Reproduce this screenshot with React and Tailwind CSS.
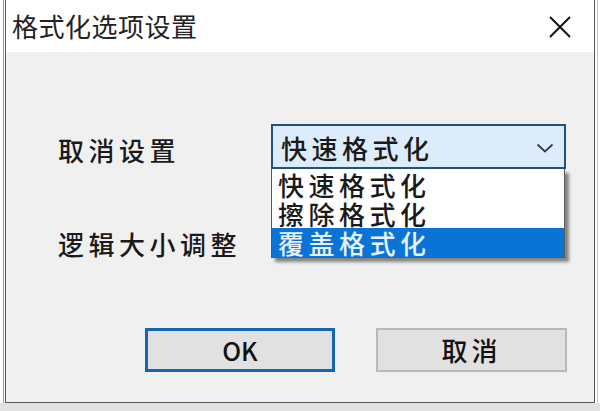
export default function App() {
  return (
    <div className="w-[600px] h-[411px] bg-white flex flex-col overflow-hidden font-['Noto_Sans_CJK_SC','Noto_Sans',sans-serif] font-medium text-[#1a1a1a]">
      <div className="flex h-[403px]">
        <div className="w-[3px] h-full bg-white" />
        <div className="w-[1px] h-full bg-[#9a9a9a]" />
        <div className="w-[1px] h-full bg-white" />
        {/* Dialog */}
        <div className="w-[590px] h-full flex flex-col border-l border-r border-b border-[#555]">
          {/* Title bar */}
          <div className="h-[52px] bg-white flex items-center justify-between pl-[6px] pr-[22px] shrink-0">
            <span className="text-[26px] leading-none tracking-[0.5px] text-[#222] font-normal">格式化选项设置</span>
            <svg width="24" height="24" viewBox="0 0 24 24" className="mt-[1px]">
              <path d="M2 2 L22 22 M22 2 L2 22" stroke="#111" strokeWidth="2" fill="none" />
            </svg>
          </div>
          {/* Body */}
          <div className="flex-1 bg-[#f0f0f0] flex flex-col pt-[72px]">
            <div className="flex items-center h-[45px] pl-[52px]">
              <span className="w-[213px] text-[26px] leading-none tracking-[4.5px] pt-[6px]">取消设置</span>
              <div className="relative w-[295px] h-[45px]">
                <div className="w-full h-full border-2 border-[#24507c] bg-[#dcecfb] flex items-center justify-between pl-[8px] pr-[10px]">
                  <span className="text-[26px] leading-none tracking-[4.5px] pt-[3px]">快速格式化</span>
                  <svg width="18" height="10" viewBox="0 0 18 10" className="mt-[2px]">
                    <path d="M1.5 1.5 L9 8.5 L16.5 1.5" stroke="#3a3a3a" strokeWidth="1.8" fill="none" />
                  </svg>
                </div>
                {/* Drop-down list */}
                <div className="absolute left-0 top-full w-[294px] bg-white border-l border-b border-r border-[#5a5a5a] shadow-[4px_4px_3px_rgba(0,0,0,0.45)] flex flex-col pt-[1px]">
                  <div className="h-[29px] flex items-center pl-[6px] text-[26px] leading-[26px] tracking-[4.5px]">快速格式化</div>
                  <div className="h-[29px] flex items-center pl-[6px] text-[26px] leading-[26px] tracking-[4.5px]">擦除格式化</div>
                  <div className="h-[29px] flex items-center pl-[6px] text-[26px] leading-[26px] tracking-[4.5px] bg-[#0a74d6] text-[#e6f2ff]">覆盖格式化</div>
                </div>
              </div>
            </div>
            <div className="flex items-center h-[45px] pl-[52px] mt-[52px]">
              <span className="w-[213px] text-[26px] leading-none tracking-[4.5px]">逻辑大小调整</span>
            </div>
            <div className="flex justify-end gap-[41px] pr-[27px] mt-[62px]">
              <button className="w-[190px] h-[44px] border-[3px] border-[#1864b4] bg-[#e1e1e1] flex items-center justify-center text-[25px] leading-none text-[#111]">
                OK
              </button>
              <button className="w-[191px] h-[44px] border-2 border-[#b9b9b9] bg-[#e1e1e1] flex items-center justify-center text-[26px] leading-none tracking-[4px] text-[#111]">
                取消
              </button>
            </div>
          </div>
        </div>
        <div className="flex-1 h-full bg-white flex">
          <div className="w-[2px]" />
          <div className="w-[1px] h-full bg-[#c8c8c8]" />
        </div>
      </div>
      <div className="flex-1 bg-[#e2e2e2]" />
    </div>
  );
}
